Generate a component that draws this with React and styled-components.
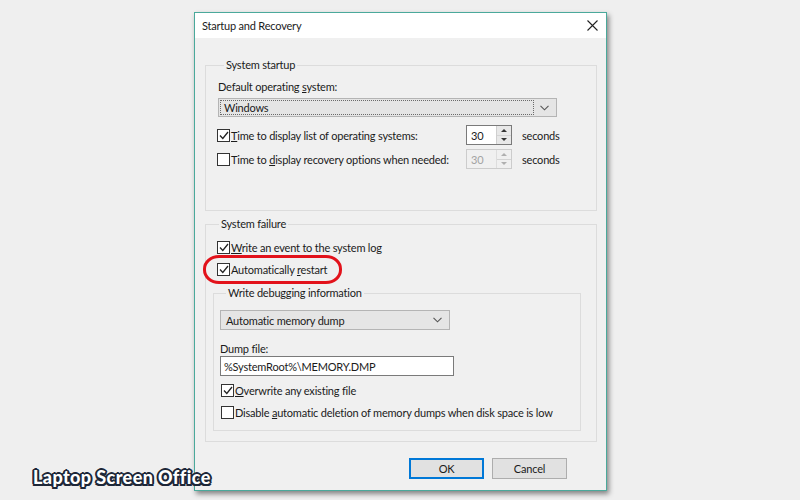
import React from "react";
import styled, { createGlobalStyle } from "styled-components";

const FONT = `"Lato", "Open Sans", "Noto Sans", sans-serif`;

const Global = createGlobalStyle`
  html, body { margin: 0; padding: 0; }
  body {
    background: #efefef;
    font-family: ${FONT};
    font-size: 11px;
    letter-spacing: -0.2px;
    color: #1b1b1b;
    width: 800px;
    height: 500px;
    overflow: hidden;
  }
  #root { height: 500px; }
`;

const Page = styled.div`
  position: relative;
  width: 800px;
  height: 500px;
  box-sizing: border-box;
  padding: 12px 0 0 194px;
`;

const Dialog = styled.div`
  width: 413px;
  box-sizing: border-box;
  border: 1px solid #4aa99b;
  background: #f0f0f0;
  box-shadow: 2px 3px 5px rgba(0, 0, 0, 0.45);
  display: flex;
  flex-direction: column;
`;

const TitleBar = styled.div`
  height: 25px;
  background: #ffffff;
  display: flex;
  align-items: center;
  justify-content: space-between;
  padding: 0 8px 0 7px;
  color: #1b1b1b;
`;

const CloseBtn = styled.svg`
  width: 11px;
  height: 11px;
`;

const Body = styled.div`
  display: flex;
  flex-direction: column;
  padding: 19px 9px 11px 10px;
`;

const Group = styled.fieldset`
  margin: ${(p) => p.$margin || "0"};
  border: 1px solid #dcdcdc;
  padding: ${(p) => p.$pad};
  display: flex;
  flex-direction: column;
  min-width: 0;
`;

const Legend = styled.legend`
  padding: 0 2px;
  margin-left: 6px;
  line-height: 16px;
  height: 16px;
`;

const Label = styled.div`
  line-height: ${(p) => p.$lh || 16}px;
  margin-top: ${(p) => p.$mt || 0}px;
`;

const Select = styled.div`
  width: ${(p) => p.$w}px;
  height: ${(p) => p.$h}px;
  box-sizing: border-box;
  margin-top: ${(p) => p.$mt || 0}px;
  border: 1px solid #b4b4b4;
  background: #e5e5e5;
  display: flex;
  align-items: center;
  padding: 1px;
`;

const SelectText = styled.div`
  flex: 1;
  align-self: stretch;
  display: flex;
  align-items: center;
  padding-left: 3px;
  border: 1px ${(p) => (p.$focus ? "dotted #6a6a6a" : "solid transparent")};
`;

const Chevron = styled.svg`
  width: 9px;
  height: 6px;
  margin: 0 6px 0 6px;
`;

const Row = styled.div`
  display: flex;
  align-items: center;
  height: ${(p) => p.$h || 20}px;
  margin-top: ${(p) => p.$mt || 0}px;
  margin-left: ${(p) => p.$ml || 0}px;
  position: relative;
`;

const Box = styled.span`
  width: 13px;
  height: 13px;
  box-sizing: border-box;
  border: 1px solid #333333;
  background: #ffffff;
  display: flex;
  align-items: center;
  justify-content: center;
  margin-right: 1px;
  flex-shrink: 0;
`;

const CheckText = styled.span`
  white-space: nowrap;
`;

const RowLabel = styled.span`
  width: ${(p) => p.$w}px;
  flex-shrink: 0;
  white-space: nowrap;
`;

const Spin = styled.div`
  width: 46px;
  height: 20px;
  box-sizing: border-box;
  border: 1px solid ${(p) => (p.$disabled ? "#cccccc" : "#7a7a7a")};
  background: ${(p) => (p.$disabled ? "#f0f0f0" : "#ffffff")};
  color: ${(p) => (p.$disabled ? "#a3a3a3" : "#1b1b1b")};
  display: flex;
  align-items: stretch;
`;

const SpinValue = styled.div`
  flex: 1;
  display: flex;
  align-items: center;
  padding-left: 4px;
`;

const SpinButtons = styled.div`
  width: 14px;
  display: flex;
  flex-direction: column;
  border-left: 1px solid ${(p) => (p.$disabled ? "#dddddd" : "#cfcfcf")};
`;

const SpinHalf = styled.div`
  flex: 1;
  display: flex;
  align-items: center;
  justify-content: center;
  background: ${(p) => (p.$disabled ? "#f0f0f0" : "#e8e8e8")};
  border-bottom: ${(p) => (p.$top ? "1px solid #d4d4d4" : "none")};
`;

const Arrow = styled.span`
  width: 0;
  height: 0;
  border-left: 3px solid transparent;
  border-right: 3px solid transparent;
  ${(p) =>
    p.$up
      ? `border-bottom: 3px solid ${p.$disabled ? "#b0b0b0" : "#333"};`
      : `border-top: 3px solid ${p.$disabled ? "#b0b0b0" : "#333"};`}
`;

const Unit = styled.span`
  margin-left: 10px;
`;

const TextInput = styled.div`
  width: 234px;
  height: 20px;
  box-sizing: border-box;
  border: 1px solid #7a7a7a;
  background: #ffffff;
  display: flex;
  align-items: center;
  padding-left: 3px;
`;

const Highlight = styled.div`
  position: absolute;
  left: -14px;
  top: -4px;
  width: 139px;
  height: 29px;
  box-sizing: border-box;
  border: 3px solid #e2121b;
  border-radius: 16px / 14px;
  pointer-events: none;
`;

const Buttons = styled.div`
  display: flex;
  justify-content: flex-end;
  gap: 8px;
  margin-top: 16px;
  padding-right: 30px;
`;

const Button = styled.div`
  width: 75px;
  height: 21px;
  box-sizing: border-box;
  border: 1px solid ${(p) => (p.$primary ? "#0078d7" : "#adadad")};
  box-shadow: ${(p) => (p.$primary ? "inset 0 0 0 1px #0078d7" : "none")};
  background: #e1e1e1;
  display: flex;
  align-items: center;
  justify-content: center;
`;

const Watermark = styled.div`
  position: absolute;
  left: 33px;
  top: 466px;
  font-family: "Lato", sans-serif;
  font-weight: 900;
  font-size: 18px;
  letter-spacing: 0.4px;
  color: #ffffff;
  text-shadow:
    -1.5px -1.5px 0 #1d2738, 1.5px -1.5px 0 #1d2738, -1.5px 1.5px 0 #1d2738,
    1.5px 1.5px 0 #1d2738, 0 -2px 0 #1d2738, 0 2px 0 #1d2738, -2px 0 0 #1d2738,
    2px 0 0 #1d2738;
`;

const Check = () => (
  <svg width="10" height="9" viewBox="0 0 10 9">
    <path d="M1 4.5 L3.8 7.5 L9 1" fill="none" stroke="#222" strokeWidth="1.3" />
  </svg>
);

const CheckBox = ({ checked, children }) => (
  <>
    <Box>{checked && <Check />}</Box>
    <CheckText>{children}</CheckText>
  </>
);

const SpinBox = ({ disabled }) => (
  <Spin $disabled={disabled}>
    <SpinValue>30</SpinValue>
    <SpinButtons $disabled={disabled}>
      <SpinHalf $top $disabled={disabled}>
        <Arrow $up $disabled={disabled} />
      </SpinHalf>
      <SpinHalf $disabled={disabled}>
        <Arrow $disabled={disabled} />
      </SpinHalf>
    </SpinButtons>
  </Spin>
);

const ChevronIcon = () => (
  <Chevron viewBox="0 0 9 6">
    <path d="M0.5 0.8 L4.5 4.8 L8.5 0.8" fill="none" stroke="#555" strokeWidth="1.1" />
  </Chevron>
);

export default function App() {
  return (
    <>
      <Global />
      <Page>
        <Dialog>
          <TitleBar>
            <span>Startup and Recovery</span>
            <CloseBtn viewBox="0 0 11 11">
              <path d="M0.5 0.5 L10.5 10.5 M10.5 0.5 L0.5 10.5" stroke="#222" strokeWidth="1.1" />
            </CloseBtn>
          </TitleBar>
          <Body>
            <Group $pad="6px 12px 40px 12px">
              <Legend>System startup</Legend>
              <Label>
                Default operating <u>s</u>ystem:
              </Label>
              <Select $w={339} $h={19} $mt={3}>
                <SelectText $focus>Windows</SelectText>
                <ChevronIcon />
              </Select>
              <Row $h={22} $mt={7} $ml={-1}>
                <Box>
                  <Check />
                </Box>
                <RowLabel $w={235}>
                  <u>T</u>ime to display list of operating systems:
                </RowLabel>
                <SpinBox />
                <Unit>seconds</Unit>
              </Row>
              <Row $h={22} $mt={2} $ml={-1}>
                <Box />
                <RowLabel $w={235}>
                  Time to <u>d</u>isplay recovery options when needed:
                </RowLabel>
                <SpinBox disabled />
                <Unit>seconds</Unit>
              </Row>
            </Group>

            <Group $pad="5px 15px 10px 7px" $margin="5px 0 0 0">
              <Legend>System failure</Legend>
              <Row $ml={4}>
                <CheckBox checked>
                  <u>W</u>rite an event to the system log
                </CheckBox>
              </Row>
              <Row $mt={2} $ml={4}>
                <CheckBox checked>
                  Automatically <u>r</u>estart
                </CheckBox>
                <Highlight />
              </Row>
              <Group $pad="9px 6px 8px 6px" $margin="6px 0 0 0">
                <Legend>Write debugging information</Legend>
                <Select $w={230} $h={20}>
                  <SelectText>Automatic memory dump</SelectText>
                  <ChevronIcon />
                </Select>
                <Label $lh={14} $mt={12}>
                  Dump file:
                </Label>
                <TextInput>%SystemRoot%\MEMORY.DMP</TextInput>
                <Row $mt={4} $ml={1}>
                  <CheckBox checked>
                    <u>O</u>verwrite any existing file
                  </CheckBox>
                </Row>
                <Row $mt={2} $ml={1}>
                  <CheckBox>
                    Disable <u>a</u>utomatic deletion of memory dumps when disk space is low
                  </CheckBox>
                </Row>
              </Group>
            </Group>

            <Buttons>
              <Button $primary>OK</Button>
              <Button>Cancel</Button>
            </Buttons>
          </Body>
        </Dialog>
        <Watermark>Laptop Screen Office</Watermark>
      </Page>
    </>
  );
}
